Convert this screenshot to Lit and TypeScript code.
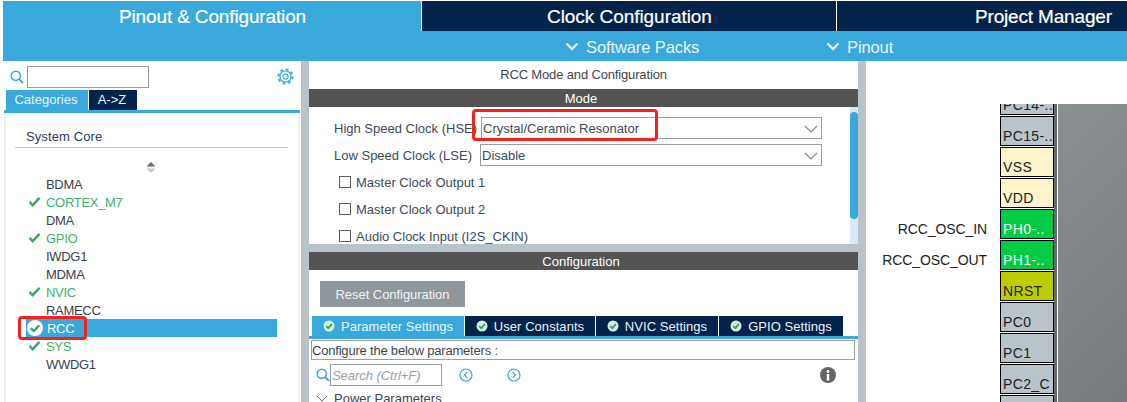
import { LitElement, html, css, svg } from "lit";
import { customElement } from "lit/decorators.js";

const items: [string, boolean][] = [
  ["BDMA", false], ["CORTEX_M7", true], ["DMA", false], ["GPIO", true], ["IWDG1", false],
  ["MDMA", false], ["NVIC", true], ["RAMECC", false], ["RCC", true], ["SYS", true], ["WWDG1", false],
];
const pins: { n: string; k: string; l?: string; cls?: string }[] = [
  { n: "PC14-..", k: "gray", cls: "clip" },
  { n: "PC15-..", k: "gray" },
  { n: "VSS", k: "cream" },
  { n: "VDD", k: "cream" },
  { n: "PH0-..", k: "green", l: "RCC_OSC_IN" },
  { n: "PH1-..", k: "green", l: "RCC_OSC_OUT" },
  { n: "NRST", k: "olive" },
  { n: "PC0", k: "gray" },
  { n: "PC1", k: "gray" },
  { n: "PC2_C", k: "gray" },
  { n: "", k: "gray" },
];

const search = svg`<svg class="sic" viewBox="0 0 14 14" width="14" height="14"><circle cx="5.8" cy="5.8" r="4.6" fill="none" stroke="#39a9dc" stroke-width="1.6"/><path d="M9.2 9.2 13 13" stroke="#39a9dc" stroke-width="1.9" fill="none"/></svg>`;
const check = svg`<svg viewBox="0 0 14 12" width="13" height="11"><path d="M1.5 6.5 5 10 12.5 2" fill="none" stroke="#3fa56f" stroke-width="2.6"/></svg>`;
const chev = svg`<svg viewBox="0 0 14 8" width="14" height="8"><path d="M1 1 7 7 13 1" fill="none" stroke="#848a90" stroke-width="1.1"/></svg>`;
const tick = svg`<svg viewBox="0 0 12 12" width="12" height="12"><circle cx="6" cy="6" r="5.5" fill="#d8ece0"/><path d="M3.2 6.1 5.3 8.1 8.9 4.2" fill="none" stroke="#35a56a" stroke-width="1.9"/></svg>`;
const gear = svg`<svg viewBox="0 0 17 17" width="17" height="17"><circle cx="8.5" cy="8.5" r="5.6" fill="none" stroke="#39a9dc" stroke-width="1.3"/><circle cx="8.5" cy="8.5" r="7.2" fill="none" stroke="#39a9dc" stroke-width="1.8" stroke-dasharray="2.827 2.827"/><circle cx="8.5" cy="8.5" r="2.5" fill="none" stroke="#39a9dc" stroke-width="1.2"/></svg>`;

@customElement("app-root")
export class AppRoot extends LitElement {
  static styles = css`
    :host { display: block; width: 1127px; height: 402px; overflow: hidden; background: #fff; font-family: "Liberation Sans", Arial, sans-serif; }
    .page { display: flex; flex-direction: column; height: 401px; margin-top: 1px; padding-left: 3px; box-sizing: border-box; }
    .top { display: grid; grid-template-columns: 418px 415px 291px; height: 30px; background: #03234b; color: #fff; font-size: 19px; -webkit-text-stroke: 0.2px #fff; }
    .top div { display: flex; align-items: center; height: 30px; box-sizing: border-box; padding-top: 2px; }
    .t1 { background: #39a9dc; padding-left: 116px; letter-spacing: -0.14px; }
    .t2 { border-left: 1px solid #fff; padding-left: 125px; letter-spacing: -0.05px; }
    .t3 { border-left: 1px solid #fff; padding-left: 138px; letter-spacing: -0.17px; }
    .sub { display: flex; height: 30px; background: #39a9dc; color: #e6f4fb; font-size: 16.5px; letter-spacing: -0.1px; align-items: center; padding: 2px 0 0 562px; box-sizing: border-box; }
    .sub span { display: flex; align-items: center; gap: 7px; }
    .sub span:first-child { width: 261px; }
    .sub svg { display: block; margin-top: -2px; }
    .main { display: flex; flex: 1; min-height: 0; }
    .left { width: 298px; flex: none; display: flex; flex-direction: column; }
    .gut { width: 8px; flex: none; background: #b9c4ca; }
    .sb { display: flex; align-items: center; height: 29px; padding: 2px 7px 0 7px; box-sizing: border-box; }
    .sic { display: block; flex: none; }
    .sb input { width: 122px; height: 22px; margin-left: 3px; box-sizing: border-box; border: 1px solid #9a9fa3; background: #fff; padding: 0; }
    .sb svg:last-child { margin-left: auto; }
    .ltabs { display: flex; height: 20px; padding-left: 3px; gap: 1px; font-size: 13px; letter-spacing: 0.03px; color: #e8f5fb; }
    .ltabs div { display: flex; align-items: center; justify-content: center; box-sizing: border-box; padding: 0 2px 2px 0; }
    .lt1 { width: 82px; background: #39a9dc; }
    .lt2 { width: 48px; background: #03234b; }
    .lline { height: 3px; background: #39a9dc; margin-left: 1px; margin-right: 1px; flex: none; }
    .lbody { flex: 1; border-left: 2px solid #f1f1f1; border-right: 2px solid #f1f1f1; margin: 0 1px; padding: 0 10px 0 9px; }
    .cat { height: 35px; border-bottom: 1px solid #b9c4ca; font-size: 13px; letter-spacing: 0.1px; color: #2c3a5a; padding: 16px 0 0 11px; box-sizing: border-box; line-height: 15px; }
    .sort { display: flex; justify-content: center; height: 27px; padding: 14px 2px 0 0; box-sizing: border-box; }
    .list { display: flex; flex-direction: column; margin-right: 11px; }
    .it { position: relative; display: flex; align-items: center; height: 18px; font-size: 13px; letter-spacing: -0.3px; color: #3a3f55; padding-left: 31px; box-sizing: border-box; }
    .it.ok { color: #3cb371; }
    .it svg { position: absolute; left: 13px; top: 3px; }
    .it.sel { background: #39a9dc; color: #fff; margin-left: 11px; padding-left: 21px; }
    .it.sel svg { left: 1px; top: 1px; }
    .red { position: absolute; border: 3px solid #f5211c; border-radius: 4px; box-sizing: border-box; pointer-events: none; }
    .r1 { left: -8px; top: -3px; width: 69px; height: 24px; }
    .mid { width: 549px; flex: none; display: flex; flex-direction: column; background: #fff; }
    .title { height: 28px; font-size: 13px; letter-spacing: -0.15px; color: #3d4652; display: flex; align-items: center; justify-content: center; padding-bottom: 2px; box-sizing: border-box; }
    .bar { height: 18px; flex: none; background: #535453; color: #fff; font-size: 13px; display: flex; align-items: center; justify-content: center; padding-right: 5px; box-sizing: border-box; }
    .mode { height: 137px; flex: none; display: flex; overflow: hidden; }
    .form { flex: 1; padding: 10px 0 0 25px; box-sizing: border-box; font-size: 13px; color: #3d4a5c; }
    .row { display: flex; align-items: center; height: 22px; margin-bottom: 5px; }
    .row label { width: 147px; flex: none; }
    .sel2 { position: relative; display: flex; align-items: center; width: 341px; height: 22px; box-sizing: border-box; border: 1px solid #9a9fa3; padding-left: 1px; }
    .sel2 svg { position: absolute; right: 3px; top: 7px; }
    .row.b label { width: 146px; }
    .row.b .sel2 { width: 342px; }
    .ck { display: flex; align-items: center; gap: 5px; height: 22px; margin: 0 0 5px 5px; }
    .ck i { display: block; width: 12px; height: 12px; border: 1px solid #5a5f64; box-sizing: border-box; }
    .r2 { left: -10px; top: -9px; width: 186px; height: 32px; }
    .sbar { width: 8px; flex: none; background: #d8e8f5; padding-top: 5px; box-sizing: border-box; }
    .sbar div { height: 107px; background: #39a9dc; border-radius: 4px; }
    .gap { height: 8px; flex: none; background: #b9c4ca; }
    .conf { flex: 1; overflow: hidden; }
    .reset { margin: 11px 0 0 11px; width: 145px; height: 26px; background: #8f969c; color: #f2f2f2; font-size: 13px; letter-spacing: -0.05px; display: flex; align-items: center; justify-content: center; }
    .ptabs { display: flex; margin: 9px 0 0 3px; height: 20px; gap: 1px; font-size: 13px; letter-spacing: 0.05px; color: #e8f4fa; }
    .ptabs div { display: flex; align-items: center; justify-content: center; gap: 6px; background: #03234b; box-sizing: border-box; }
    .ptabs div.on { background: #39a9dc; }
    .pline { height: 3px; background: #39a9dc; flex: none; }
    .cfg { margin: 1px 3px 0 2px; height: 20px; border: 1px solid #9a9fa3; box-sizing: border-box; font-size: 13px; letter-spacing: -0.2px; color: #3d4652; display: flex; align-items: center; }
    .tools { display: flex; align-items: center; height: 22px; margin: 4px 0 0 7px; }
    .tools input { width: 112px; height: 22px; box-sizing: border-box; border: 1px solid #9a9fa3; margin: 0; padding: 0 0 0 1px; font: italic 13px "Liberation Sans", sans-serif; letter-spacing: -0.05px; }
    .tools input::placeholder { color: #9aa0a6; opacity: 1; }
    .tools svg { display: block; flex: none; }
    .prev { margin-left: 17px; }
    .next { margin-left: 34px; }
    .info { margin-left: 299px; }
    .pp { display: flex; align-items: center; gap: 6px; margin: 4px 0 0 7px; font-size: 13px; color: #3d4652; height: 16px; }
    .right { flex: 1; display: flex; flex-direction: column; padding-top: 43px; overflow: hidden; min-width: 0; }
    .chip { flex: 1; display: flex; min-height: 0; }
    .pins { width: 188px; flex: none; display: flex; flex-direction: column; gap: 1.05px; }
    .prow { display: flex; flex: none; height: 30px; }
    .prow.clip { height: 11px; }
    .lab { width: 121px; flex: none; text-align: right; font-size: 14px; letter-spacing: -0.1px; color: #222; padding-top: 12px; box-sizing: border-box; line-height: 16px; }
    .pin { width: 54px; margin-left: 13px; flex: none; box-sizing: border-box; border: 1px solid #000; font-size: 14px; letter-spacing: 0.35px; color: #222; display: flex; align-items: flex-end; padding: 0 0 1px 2px; overflow: hidden; white-space: nowrap; line-height: 16px; }
    .pin.clip { border-top: 0; }
    .gray { background: #b9c4ca; } .cream { background: #fef4cc; } .green { background: #00cc44; color: #fff; } .olive { background: #bccc00; }
    .edge { width: 4px; flex: none; background: #666a6c; border-right: 1px solid #fff; box-sizing: border-box; }
    .die { flex: 1; background: linear-gradient(135deg, #8a8f92, #767c7e); }
  `;

  render() {
    const cs = [
      ["Parameter Settings", 152, true],
      ["User Constants", 130, false],
      ["NVIC Settings", 122, false],
      ["GPIO Settings", 124, false],
    ] as [string, number, boolean][];
    return html`<div class="page">
      <div class="top"><div class="t1">Pinout &amp; Configuration</div><div class="t2">Clock Configuration</div><div class="t3">Project Manager</div></div>
      <div class="sub">
        <span><svg viewBox="0 0 14 9" width="14" height="9"><path d="M1.5 1.5 7 7 12.5 1.5" fill="none" stroke="#fff" stroke-width="2"/></svg>Software Packs</span>
        <span><svg viewBox="0 0 14 9" width="14" height="9"><path d="M1.5 1.5 7 7 12.5 1.5" fill="none" stroke="#fff" stroke-width="2"/></svg>Pinout</span>
      </div>
      <div class="main">
        <div class="left">
          <div class="sb">${search}<input />${gear}</div>
          <div class="ltabs"><div class="lt1">Categories</div><div class="lt2">A-&gt;Z</div></div>
          <div class="lline"></div>
          <div class="lbody">
            <div class="cat">System Core</div>
            <div class="sort"><svg viewBox="0 0 10 11" width="10" height="11"><path d="M5 0 9.5 4.5H.5z" fill="#6a6f72"/><path d="M5 11 .5 6.5h9z" fill="#c6cacc"/></svg></div>
            <div class="list">
              ${items.map(([n, ok]) => n === "RCC"
                ? html`<div class="it sel"><svg viewBox="0 0 16 16" width="16" height="16"><circle cx="8" cy="8" r="8" fill="#fff"/><path d="M3.8 8.2 6.8 11 12.2 5.2" fill="none" stroke="#3fa56f" stroke-width="2.4"/></svg>${n}<span class="red r1"></span></div>`
                : html`<div class="it ${ok ? "ok" : ""}">${ok ? check : ""}${n}</div>`)}
            </div>
          </div>
        </div>
        <div class="gut"></div>
        <div class="mid">
          <div class="title">RCC Mode and Configuration</div>
          <div class="bar">Mode</div>
          <div class="mode">
            <div class="form">
              <div class="row"><label>High Speed Clock (HSE)</label><div class="sel2">Crystal/Ceramic Resonator${chev}<span class="red r2"></span></div></div>
              <div class="row b"><label>Low Speed Clock (LSE)</label><div class="sel2">Disable${chev}</div></div>
              ${["Master Clock Output 1", "Master Clock Output 2", "Audio Clock Input (I2S_CKIN)"].map((t) => html`<div class="ck"><i></i>${t}</div>`)}
            </div>
            <div class="sbar"><div></div></div>
          </div>
          <div class="gap"></div>
          <div class="bar">Configuration</div>
          <div class="conf">
            <div class="reset">Reset Configuration</div>
            <div class="ptabs">${cs.map(([t, w, on]) => html`<div class=${on ? "on" : ""} style="width:${w}px">${tick}${t}</div>`)}</div>
            <div class="pline"></div>
            <div class="cfg">Configure the below parameters :</div>
            <div class="tools">
              ${search}<input placeholder="Search (Ctrl+F)" />
              <svg class="prev" viewBox="0 0 14 14" width="14" height="14"><circle cx="7" cy="7" r="6" fill="none" stroke="#39a9dc" stroke-width="1.2"/><path d="M8.3 4.2 5.5 7 8.3 9.8" fill="none" stroke="#39a9dc" stroke-width="1.2"/></svg>
              <svg class="next" viewBox="0 0 14 14" width="14" height="14"><circle cx="7" cy="7" r="6" fill="none" stroke="#39a9dc" stroke-width="1.2"/><path d="M5.7 4.2 8.5 7 5.7 9.8" fill="none" stroke="#39a9dc" stroke-width="1.2"/></svg>
              <svg class="info" viewBox="0 0 16 16" width="16" height="16"><circle cx="8" cy="8" r="8" fill="#666"/><rect x="6.8" y="7" width="2.4" height="6.5" fill="#fff"/><circle cx="8" cy="4.5" r="1.4" fill="#fff"/></svg>
            </div>
            <div class="pp"><svg viewBox="0 0 12 7" width="12" height="7"><path d="M1 1 6 6 11 1" fill="none" stroke="#666" stroke-width="1"/></svg>Power Parameters</div>
          </div>
        </div>
        <div class="gut"></div>
        <div class="right">
          <div class="chip">
            <div class="pins">
              ${pins.map((p) => html`<div class="prow ${p.cls ?? ""}"><div class="lab">${p.l ?? ""}</div><div class="pin ${p.k} ${p.cls ?? ""}">${p.n}</div></div>`)}
            </div>
            <div class="edge"></div>
            <div class="die"></div>
          </div>
        </div>
      </div>
    </div>`;
  }
}
